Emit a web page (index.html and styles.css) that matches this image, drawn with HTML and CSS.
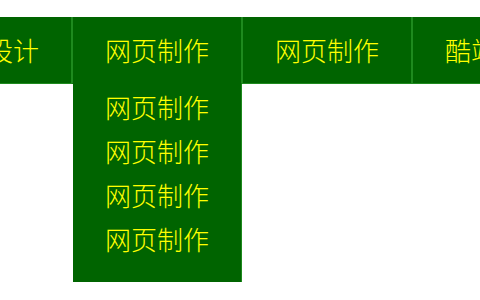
FILE: index.html
```html
<!DOCTYPE html>
<html lang="zh-CN">
<head>
<meta charset="utf-8">
<title>导航菜单</title>
<link rel="stylesheet" href="styles.css">
</head>
<body>
<div class="page">
  <ul class="nav">
    <li class="nav-item"><a class="nav-link" href="#">网页设计</a></li>
    <li class="nav-item open"><a class="nav-link" href="#">网页制作</a>
      <ul class="submenu">
        <li><a class="sub-link" href="#">网页制作</a></li>
        <li><a class="sub-link" href="#">网页制作</a></li>
        <li><a class="sub-link" href="#">网页制作</a></li>
        <li><a class="sub-link" href="#">网页制作</a></li>
      </ul>
    </li>
    <li class="nav-item"><a class="nav-link" href="#">网页制作</a></li>
    <li class="nav-item"><a class="nav-link" href="#">酷站代码</a></li>
  </ul>
</div>
</body>
</html>
```

FILE: styles.css
```css
html {
  overflow: hidden;
}

body {
  margin: 0;
  padding: 0;
  background: #ffffff;
}

.page {
  width: 480px;
  height: 300px;
  padding-top: 17px;
  box-sizing: border-box;
  font-family: "Noto Sans CJK SC", "Noto Sans", sans-serif;
  font-weight: 300;
}

.nav {
  list-style: none;
  margin: 0;
  padding: 0 0 0 4px;
  display: flex;
  justify-content: center;
}

.nav-item {
  position: relative;
  flex: 0 0 168px;
  height: 66px;
  background: #006400;
  border-left: 1px solid #1e8a1e;
  border-right: 1px solid #1e8a1e;
  border-bottom: 1px solid #1e8a1e;
}

.nav-item.open {
  border-bottom-color: #006400;
}

.nav-link {
  display: block;
  height: 66px;
  line-height: 66px;
  text-align: center;
  color: #ffff00;
  font-size: 26px;
  text-decoration: none;
  white-space: nowrap;
}

.submenu {
  position: absolute;
  top: 67px;
  left: 0;
  z-index: 2;
  width: 168px;
  margin: 0;
  padding: 1px 0 21px;
  list-style: none;
  background: #006400;
  border-right: 1px solid #1e8a1e;
}

.sub-link {
  display: block;
  height: 44px;
  line-height: 44px;
  text-align: center;
  color: #ffff00;
  font-size: 26px;
  text-decoration: none;
}
```
